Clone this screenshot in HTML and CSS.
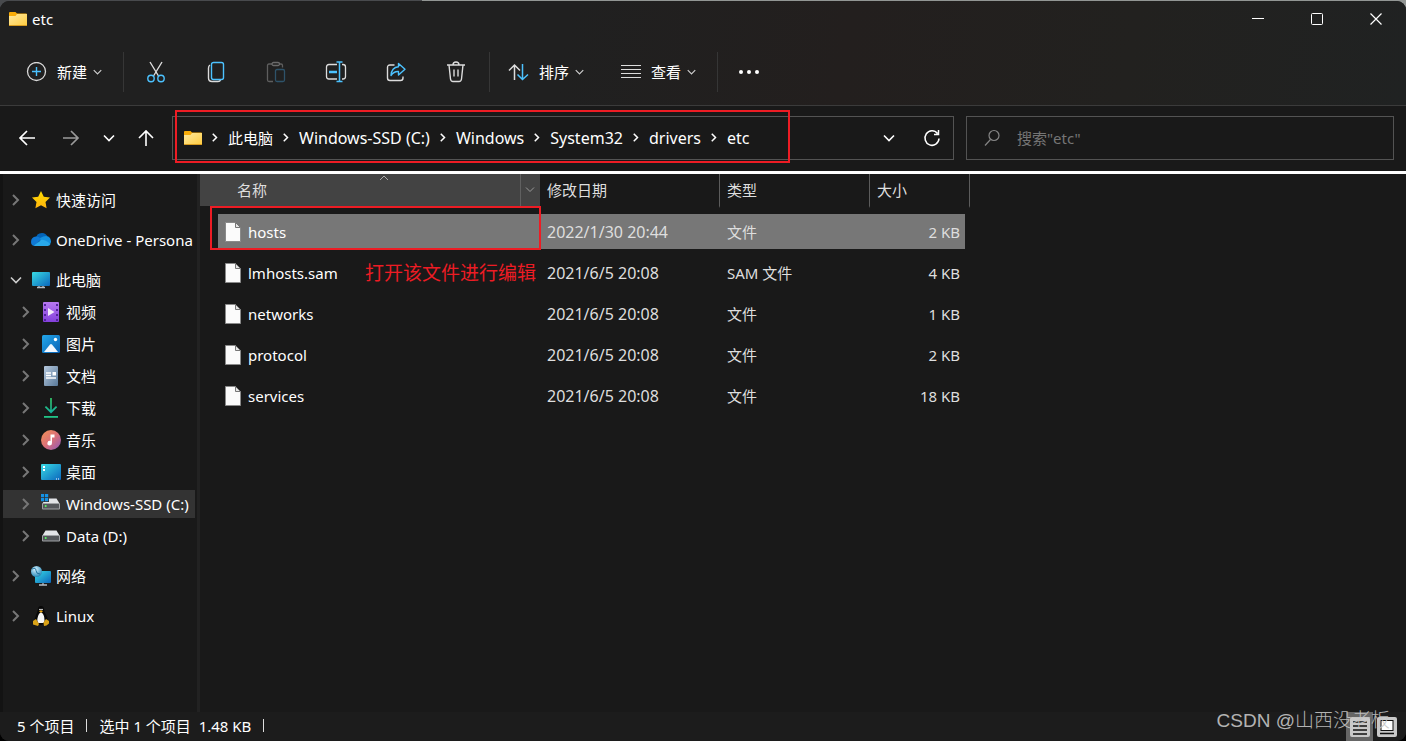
FILE: index.html
```html
<!DOCTYPE html>
<html lang="zh-CN">
<head>
<meta charset="utf-8">
<title>etc</title>
<link rel="stylesheet" href="styles.css">
</head>
<body>
<svg class="defs" aria-hidden="true">
  <defs>
    <linearGradient id="gFolder" x1="0" y1="0" x2="1" y2="1"><stop offset="0" stop-color="#ffe9a0"/><stop offset="1" stop-color="#ffcc3f"/></linearGradient>
    <linearGradient id="gScreen" x1="0" y1="0" x2="1" y2="1"><stop offset="0" stop-color="#38dbe4"/><stop offset="1" stop-color="#0b66bd"/></linearGradient>
    <linearGradient id="gVideo" x1="0" y1="0" x2="0" y2="1"><stop offset="0" stop-color="#b879f0"/><stop offset="1" stop-color="#8440dc"/></linearGradient>
    <linearGradient id="gPic" x1="0" y1="0" x2="1" y2="1"><stop offset="0" stop-color="#23a8ea"/><stop offset="1" stop-color="#0860b4"/></linearGradient>
    <linearGradient id="gDoc" x1="0" y1="0" x2="1" y2="1"><stop offset="0" stop-color="#b6c9de"/><stop offset="1" stop-color="#587898"/></linearGradient>
    <linearGradient id="gMusic" x1="0" y1="0" x2="1" y2="1"><stop offset="0" stop-color="#f59355"/><stop offset="0.5" stop-color="#dc7178"/><stop offset="1" stop-color="#8d58ba"/></linearGradient>
    <linearGradient id="gStar" x1="0" y1="0" x2="0" y2="1"><stop offset="0" stop-color="#ffdc00"/><stop offset="1" stop-color="#ffb40f"/></linearGradient>
    <linearGradient id="gDown" x1="0" y1="0" x2="0" y2="1"><stop offset="0" stop-color="#35d16d"/><stop offset="1" stop-color="#12ad9d"/></linearGradient>
    <radialGradient id="gGlobe" cx="0.4" cy="0.3" r="0.7"><stop offset="0" stop-color="#d9f3ff"/><stop offset="1" stop-color="#2689b9"/></radialGradient>
    <symbol id="folder" viewBox="0 0 18 14"><path d="M0 1q0-1 1-1h5.500l1.500 1.500h9q1 0 1 1V4H0z" fill="#f9ac08"/><path d="M0 4h6.500l1.500-2h10v10.500q0 1.500-1 1.500H1q-1 0-1-1z" fill="url(#gFolder)"/><path d="M0 13.500h18" stroke="#d89c20"/></symbol>
    <symbol id="right" viewBox="0 0 10 12"><path d="M2 1l5 5-5 5" fill="none" stroke="currentColor" stroke-width="2"/></symbol>
    <symbol id="down" viewBox="0 0 12 8"><path d="M1 1.500l5 5 5-5" fill="none" stroke="currentColor" stroke-width="1.600"/></symbol>
    <symbol id="file" viewBox="0 0 16 20"><path d="M.5.5h10l5 5v14H.5z" fill="#fbfbfb" stroke="#8a8a8a"/><path d="M10.500.5v5h5z" fill="#e5e5e5" stroke="#777"/></symbol>
    <symbol id="disk" viewBox="0 0 20 20"><path d="M4.500 4.500h11l3 5h-17z" fill="#e2e4e7"/><rect x="1" y="9" width="18" height="6.500" rx="1" fill="#a0a3a6"/><rect x="2" y="10" width="16" height="4.500" fill="#54575b"/><circle cx="4.700" cy="12" r="1" fill="#57ff62"/></symbol>
  </defs>
</svg>
<div class="window">
  <header class="chrome">
    <div class="titlebar">
      <svg class="folder"><use href="#folder"/></svg>
      <h1 class="title">etc</h1>
      <div class="controls">
        <button class="control" aria-label="最小化"><svg width="12" height="12"><path d="M0 5.500h12" stroke="#fff"/></svg></button>
        <button class="control" aria-label="最大化"><svg width="12" height="12"><rect x=".5" y=".5" width="11" height="11" rx="1" fill="none" stroke="#fff"/></svg></button>
        <button class="control" aria-label="关闭"><svg width="12" height="12"><path d="M.5.5l11 11M11.500.5l-11 11" stroke="#fff" stroke-width="1.200"/></svg></button>
      </div>
    </div>
    <div class="toolbar" role="toolbar">
      <button class="command command-new">
        <svg width="22" height="20" viewBox="0 0 22 20" fill="none"><circle cx="10.500" cy="9.500" r="9" stroke="#d9d9d9" stroke-width="1.300"/><path d="M6 9.500h9M10.500 5v9" stroke="#4cc2ff" stroke-width="1.400"/></svg>
        <span>新建</span><svg class="caret"><use href="#down"/></svg>
      </button>
      <span class="divider"></span>
      <div class="tools">
        <button class="tool" aria-label="剪切"><svg width="20" height="22" fill="none" stroke-width="1.400"><path d="M4 1l8.500 14M16 1L7.500 15" stroke="#dcdcdc"/><circle cx="5" cy="17.500" r="3.200" stroke="#4cc2ff"/><circle cx="15" cy="17.500" r="3.200" stroke="#4cc2ff"/></svg></button>
        <button class="tool" aria-label="复制"><svg width="20" height="22" fill="none" stroke-width="1.400"><path d="M4 4q-1.500 1-1.500 3v10q0 3.500 3.500 3.500h6q2 0 2.500-1.500" stroke="#dcdcdc"/><rect x="5.500" y="1.500" width="12" height="17" rx="2" stroke="#4cc2ff"/></svg></button>
        <button class="tool" aria-label="粘贴" disabled><svg width="20" height="22" fill="none" stroke-width="1.300"><path d="M6 3H3q-1.500 0-1.500 1.500v14.500q0 1.500 1.500 1.500h4M13 3h2q1.500 0 1.500 1.500v2" stroke="#5e5e5e"/><rect x="6" y="1.500" width="7.500" height="3" rx="1.500" stroke="#6a6a6a"/><rect x="9.500" y="8.500" width="9" height="12" rx="1.500" stroke="#2e536a"/></svg></button>
        <button class="tool" aria-label="重命名"><svg width="22" height="22" fill="none" stroke-width="1.300"><path d="M12 3.500H4q-2.500 0-2.500 2.500v9.500q0 2.500 2.500 2.500h8M17 3.500h1q2.500 0 2.500 2.500v9.500q0 2.500-2.500 2.500h-1" stroke="#dcdcdc"/><path d="M14.500 1.500v19M11.500 1h6M11.500 20.500h6" stroke="#4cc2ff" stroke-width="1.500"/><path d="M4 11h8" stroke="#4cc2ff" stroke-width="2.400"/></svg></button>
        <button class="tool" aria-label="共享"><svg width="20" height="22" fill="none" stroke-width="1.400"><path d="M8.500 4H4Q1.500 4 1.500 6.500V17Q1.500 19.500 4 19.500h10.500q2.500 0 2.500-2.500v-1.500" stroke="#dcdcdc"/><path d="M12.500 2.500l6.500 5.700-6.500 5.800v-3.500q-4.500-.4-7.500 4 .5-8 7.500-8.700z" stroke="#4cc2ff" stroke-linejoin="round"/></svg></button>
        <button class="tool" aria-label="删除"><svg width="20" height="22" fill="none" stroke="#dcdcdc" stroke-width="1.400"><path d="M1 4h18M7 4q0-3 3-3t3 3M3 4l1.500 14q.3 2.500 2.500 2.500h6q2.200 0 2.500-2.500L17 4M8 8.500v7M12 8.500v7"/></svg></button>
      </div>
      <span class="divider"></span>
      <button class="command command-sort">
        <svg width="22" height="20" fill="none" stroke-width="1.500"><path d="M6.500 18V3M1 8.500L6.500 3 12 8.500" stroke="#dcdcdc"/><path d="M14.500 2v15.500M9.500 12.500l5 5 5.500-5" stroke="#4cc2ff"/></svg>
        <span>排序</span><svg class="caret"><use href="#down"/></svg>
      </button>
      <button class="command command-view">
        <svg width="22" height="20"><path d="M1 3.500h20M1 7.500h20M1 11.500h20M1 15.500h20" stroke="#dcdcdc" stroke-width="1.200"/></svg>
        <span>查看</span><svg class="caret"><use href="#down"/></svg>
      </button>
      <span class="divider"></span>
      <button class="command command-more" aria-label="更多"><svg width="22" height="6" fill="#fff"><circle cx="3" cy="3" r="2"/><circle cx="11" cy="3" r="2"/><circle cx="19" cy="3" r="2"/></svg></button>
    </div>
  </header>

  <div class="navbar">
    <button class="nav-button" aria-label="后退"><svg width="18" height="18" fill="none" stroke="#fff" stroke-width="1.700"><path d="M17 9H2M9 2L2 9l7 7"/></svg></button>
    <button class="nav-button" aria-label="前进"><svg width="18" height="18" fill="none" stroke="#9a9a9a" stroke-width="1.700"><path d="M1 9h15M9 2l7 7-7 7"/></svg></button>
    <button class="nav-button nav-recent" aria-label="最近位置"><svg width="12" height="8"><use href="#down"/></svg></button>
    <button class="nav-button nav-up" aria-label="上移"><svg width="18" height="18" fill="none" stroke="#fff" stroke-width="1.600"><path d="M9 17V2M2 9l7-7 7 7"/></svg></button>
    <div class="address">
      <svg class="folder"><use href="#folder"/></svg>
      <ol class="crumbs">
        <li><svg class="sep"><use href="#right"/></svg><a href="#" class="cjk">此电脑</a></li>
        <li><svg class="sep"><use href="#right"/></svg><a href="#">Windows-SSD (C:)</a></li>
        <li><svg class="sep"><use href="#right"/></svg><a href="#">Windows</a></li>
        <li><svg class="sep"><use href="#right"/></svg><a href="#">System32</a></li>
        <li><svg class="sep"><use href="#right"/></svg><a href="#">drivers</a></li>
        <li><svg class="sep"><use href="#right"/></svg><a href="#">etc</a></li>
      </ol>
      <button class="address-button" aria-label="历史记录"><svg width="12" height="8"><use href="#down"/></svg></button>
      <button class="address-button" aria-label="刷新"><svg width="18" height="18" fill="none" stroke="#fff" stroke-width="1.500"><path d="M14.500 4.500A7 7.300 0 1 0 16 9.500M15.500 1v4.500H11"/></svg></button>
      <span class="mark mark-address"></span>
    </div>
    <label class="search">
      <svg width="16" height="18" fill="none" stroke="#858585" stroke-width="1.200"><circle cx="10" cy="6.500" r="5"/><path d="M6.500 10.500L1 16.500"/></svg>
      <input type="text" placeholder='搜索"etc"' aria-label="搜索">
    </label>
  </div>

  <div class="body">
    <nav class="sidebar">
      <a href="#" class="node"><svg class="twist"><use href="#right"/></svg>
        <svg class="icon"><path d="M10 1l2.800 5.700 6.200.9-4.500 4.400 1.100 6.200L10 15.300l-5.600 2.900 1.100-6.200L1 7.600l6.200-.9z" fill="url(#gStar)"/></svg><span>快速访问</span></a>
      <a href="#" class="node spaced"><svg class="twist"><use href="#right"/></svg>
        <svg class="icon"><path d="M5 9q0-6 6-6 4 0 5.500 4L10 12z" fill="#0364b8"/><path d="M0 12q0-5 5-5.500 3-.5 5 2.500l-6 7Q0 16 0 12z" fill="#0f78d4"/><path d="M9 8q7-4 10 0 2 4 0 6l-9-2z" fill="#1490df"/><path d="M3 15.500L10 10q3-1 9.500 4-.8 2-3 2H4z" fill="#28a8ea"/></svg><span>OneDrive - Persona</span></a>
      <a href="#" class="node open spaced"><svg class="twist"><use href="#down"/></svg>
        <svg class="icon"><rect x="1" y="2" width="18" height="14" rx="1" fill="url(#gScreen)"/><path d="M6 17.500h8M8 16v1.500h4V16" stroke="#b5bcc4" fill="none" stroke-width="1.300"/></svg><span>此电脑</span></a>
      <a href="#" class="node child"><svg class="twist"><use href="#right"/></svg>
        <svg class="icon"><rect x="2" y="0" width="16" height="20" rx="1" fill="url(#gVideo)"/><path d="M4 2v17M16 2v17" stroke="#51239a" stroke-width="2" stroke-dasharray="2 3"/><path d="M7 6l6.500 4L7 14z" fill="#f4eafb"/></svg><span>视频</span></a>
      <a href="#" class="node child"><svg class="twist"><use href="#right"/></svg>
        <svg class="icon"><rect x="1" y="1" width="18" height="18" rx="1.500" fill="url(#gPic)"/><path d="M3 18l6-7.500q1-1 2 0l6 7.500z" fill="#f2f8ff"/><circle cx="14.500" cy="5.500" r="1.700" fill="#fff"/></svg><span>图片</span></a>
      <a href="#" class="node child"><svg class="twist"><use href="#right"/></svg>
        <svg class="icon"><rect x="3" y="0" width="14" height="20" rx="1" fill="url(#gDoc)"/><path d="M5 7h5M5 9.500h5M5 12h10" stroke="#fff" stroke-width="1.300"/><rect x="11.500" y="6" width="3.500" height="3.500" fill="#fff"/></svg><span>文档</span></a>
      <a href="#" class="node child"><svg class="twist"><use href="#right"/></svg>
        <svg class="icon"><path d="M9.200 0h1.600v12l4.200-4 1.200 1.200L10 15.500 3.800 9.200 5 8l4.200 4z" fill="url(#gDown)"/><rect x="3" y="18" width="14" height="1.800" fill="#21c487"/></svg><span>下载</span></a>
      <a href="#" class="node child"><svg class="twist"><use href="#right"/></svg>
        <svg class="icon"><circle cx="10" cy="10" r="10" fill="url(#gMusic)"/><path d="M9.500 4.500h4v3h-2.500V13a2.300 2.300 0 1 1-1.500-2z" fill="#fff"/></svg><span>音乐</span></a>
      <a href="#" class="node child"><svg class="twist"><use href="#right"/></svg>
        <svg class="icon"><rect y="2" width="20" height="16" rx="1" fill="url(#gScreen)"/><path d="M2 4h2v2H2zM2 7h2v2H2zM15 16.500h1v1h-1zM17 16.500h1v1h-1z" fill="#fff"/></svg><span>桌面</span></a>
      <a href="#" class="node child current"><svg class="twist"><use href="#right"/></svg>
        <svg class="icon"><use href="#disk"/><rect width="8" height="8" fill="#303030"/><path d="M0 0h3.200v3.200H0zM4 0h3.200v3.200H4zM0 4h3.200v3.200H0zM4 4h3.200v3.200H4z" fill="#1492e6"/></svg><span>Windows-SSD (C:)</span></a>
      <a href="#" class="node child"><svg class="twist"><use href="#right"/></svg>
        <svg class="icon"><use href="#disk"/></svg><span>Data (D:)</span></a>
      <a href="#" class="node spaced"><svg class="twist"><use href="#right"/></svg>
        <svg class="icon"><rect x="4" y="5" width="16" height="12" rx="1" fill="url(#gScreen)"/><path d="M8 19h8M12 17v2" stroke="#b5bcc4" stroke-width="1.300"/><circle cx="5.500" cy="5.500" r="5.500" fill="url(#gGlobe)"/><path d="M1 3q4-2 4 1.500T9 8" fill="none" stroke="#1e719b"/></svg><span>网络</span></a>
      <a href="#" class="node spaced"><svg class="twist"><use href="#right"/></svg>
        <svg class="icon"><path d="M10 0q3.200 0 3.200 4 0 2 2 5t1.300 7L10 19l-6.500-3Q3.500 12 5 9t1.800-5Q6.800 0 10 0z" fill="#080808"/><path d="M10 6.500q2 0 3.200 4.500 1 4-.7 6H7.500q-2-2-.7-6Q8 6.500 10 6.500z" fill="#f7f7f7"/><circle cx="9" cy="3.500" r=".8" fill="#fff"/><circle cx="11" cy="3.500" r=".8" fill="#fff"/><path d="M8 5.200l2-1 2 1-2 1.500z" fill="#efab13"/><path d="M2 15l3-2 3 5-1 2-5-1.500zM18 15l-3-2-2.500 3.500.5 3.500 2.500-.5 2.500-2z" fill="#dba317"/></svg><span>Linux</span></a>
    </nav>

    <main class="files">
      <table class="list">
        <colgroup><col class="col-name"><col class="col-date"><col class="col-type"><col class="col-size"></colgroup>
        <thead>
          <tr>
            <th class="sorted">名称<svg class="sort-mark" width="10" height="6" fill="none" stroke="#aaa"><path d="M1 5l4-4 4 4"/></svg>
              <button class="filter" aria-label="筛选"><svg width="10" height="8" fill="none" stroke="#999"><path d="M1 1.500l4 4 4-4"/></svg></button></th>
            <th>修改日期</th><th>类型</th><th>大小</th>
          </tr>
        </thead>
        <tbody>
          <tr class="selected"><td><div class="name"><svg class="file"><use href="#file"/></svg>hosts</div><span class="mark mark-row"></span></td><td class="date">2022/1/30 20:44</td><td>文件</td><td>2 KB</td></tr>
          <tr><td><div class="name"><svg class="file"><use href="#file"/></svg>lmhosts.sam</div><span class="note">打开该文件进行编辑</span></td><td class="date">2021/6/5 20:08</td><td>SAM 文件</td><td>4 KB</td></tr>
          <tr><td><div class="name"><svg class="file"><use href="#file"/></svg>networks</div></td><td class="date">2021/6/5 20:08</td><td>文件</td><td>1 KB</td></tr>
          <tr><td><div class="name"><svg class="file"><use href="#file"/></svg>protocol</div></td><td class="date">2021/6/5 20:08</td><td>文件</td><td>2 KB</td></tr>
          <tr><td><div class="name"><svg class="file"><use href="#file"/></svg>services</div></td><td class="date">2021/6/5 20:08</td><td>文件</td><td>18 KB</td></tr>
        </tbody>
      </table>
    </main>
  </div>

  <footer class="status">
    <span class="status-item">5 个项目</span>
    <span class="status-item">选中 1 个项目&nbsp; 1.48 KB</span>
    <div class="views">
      <button class="view active" aria-label="详细信息"><svg width="20" height="20"><rect width="20" height="20" rx="2" fill="#c9c9c9"/><path d="M3 5h14M3 9h14M3 13h14M3 17h14" stroke="#111" stroke-width="1.500"/></svg></button>
      <button class="view" aria-label="大图标"><svg width="20" height="20"><rect width="20" height="20" rx="2" fill="#c9c9c9"/><rect x="4" y="3.500" width="12" height="10" fill="#fff" stroke="#111"/><path d="M3 16.500h14" stroke="#111" stroke-width="1.500"/></svg></button>
    </div>
    <span class="watermark">CSDN @山西没老板</span>
  </footer>
</div>
</body>
</html>
```
FILE: styles.css
```css
* { box-sizing: border-box; }

body {
  margin: 0;
  background: #000 linear-gradient(to right, #484a4d 30%, #929694 30%, #929694 100%) top / 100% 16px no-repeat;
  color: #fff;
  font: 15px/20px "Noto Sans", "Noto Sans CJK SC", sans-serif;
}

button {
  padding: 0;
  border: 0;
  background: none;
  color: inherit;
  font: inherit;
}

a { color: inherit; text-decoration: none; }
svg { display: block; flex: none; }
.defs { position: absolute; width: 0; height: 0; }

.window {
  display: flex;
  flex-direction: column;
  min-height: calc(100vh - 1px);
  margin-top: 1px;
  border-radius: 9px;
  background: #191919;
  overflow: hidden;
}

/* Title bar and command bar */
.chrome {
  border-bottom: 1px solid #3b3b3b;
  background: linear-gradient(100deg, #202020 40%, #231f1e 60%, #22211f 80%, #202222);
}

.titlebar {
  display: flex;
  align-items: center;
  height: 36px;
  padding: 0 1px 0 9px;
}

.folder { width: 18px; height: 14px; }
.title { margin: 0 0 0 5px; font-size: 15px; font-weight: 400; }
.controls { display: flex; margin-left: auto; }
.control { display: grid; place-items: center; width: 59px; height: 36px; }

.toolbar { display: flex; align-items: center; height: 68px; padding-top: 2px; }
.divider { width: 1px; height: 40px; background: #363636; }
.tools { display: flex; padding: 0 3px 0 2px; }
.tool { display: grid; place-items: center; width: 60px; height: 44px; }
.command { display: flex; align-items: center; gap: 9px; height: 44px; }
.command-new { width: 123px; padding-left: 26px; }
.command-sort { width: 112px; padding-left: 18px; }
.command-view { width: 115px; padding-left: 18px; }
.command-more { padding: 0 20px; }
.caret { width: 9px; height: 6px; margin-left: -3px; color: #ccc; }

/* Navigation */
.navbar {
  display: flex;
  align-items: center;
  height: 65px;
  padding: 0 12px 2px 5px;
}

.nav-button { display: grid; place-items: center; width: 44px; height: 44px; }
.nav-recent { width: 32px; }
.nav-up { width: 42px; }

.address {
  position: relative;
  display: flex;
  flex: 769 1 0;
  align-items: center;
  height: 44px;
  margin-left: 5px;
  padding-left: 11px;
  border: 1px solid #535353;
}

.crumbs {
  display: flex;
  margin: 0 auto 0 0;
  padding: 0;
  font-size: 16px;
  list-style: none;
}

.crumbs li { display: flex; align-items: center; }
.crumbs .cjk { font-size: 15px; }
.sep { width: 8px; height: 9px; margin: 0 9px; }
.address-button { display: grid; place-items: center; width: 43px; height: 42px; }

.search {
  display: flex;
  flex: 409 1 0;
  align-items: center;
  gap: 17px;
  height: 44px;
  margin-left: 12px;
  padding-left: 17px;
  border: 1px solid #535353;
}

.search input {
  flex: 1;
  min-width: 0;
  padding: 0;
  border: 0;
  outline: 0;
  background: none;
  color: #fff;
  font: inherit;
}

.search input::placeholder { color: #757575; }

/* Folder tree */
.body {
  display: flex;
  flex: 1;
  border-top: 3px solid #fff;
}

.sidebar {
  display: flex;
  flex: none;
  flex-direction: column;
  gap: 4px;
  width: 200px;
  padding: 12px 2px 12px 0;
  border-right: 3px solid #222;
  border-left: 3px solid #131313;
}

.node {
  display: flex;
  align-items: center;
  height: 28px;
  padding-left: 8px;
  overflow: hidden;
  white-space: nowrap;
}

.spaced { margin-top: 8px; }
.child { padding-left: 18px; }
.current { background: #333; }
.twist { width: 10px; height: 12px; margin-right: 10px; color: #777; }
.open .twist { width: 12px; height: 8px; margin: 0 9px 0 -1px; color: #ccc; }
.icon { width: 20px; height: 20px; margin-right: 5px; }

/* File list */
.files { flex: 1; min-width: 0; }
.list { width: 770px; border-spacing: 0; table-layout: fixed; }
.col-name { width: 340px; }
.col-date { width: 180px; }
.col-type { width: 150px; }
.col-size { width: 100px; }

.list th {
  position: relative;
  height: 34px;
  padding: 0 7px;
  border-right: 1px solid #5c5c5c;
  border-bottom: 2px solid #191919;
  color: #dedede;
  font-weight: 400;
  text-align: left;
}

.list .sorted { padding-left: 37px; border-right: 0; background: #434343; }
.sort-mark { position: absolute; top: 1px; left: 179px; }

.filter {
  position: absolute;
  top: 0;
  right: 0;
  display: grid;
  place-items: center;
  width: 20px;
  height: 32px;
  padding-right: 2px;
  border-left: 1px solid #606060;
}

.list td {
  position: relative;
  height: 41px;
  padding: 0 7px;
  border: 0 solid transparent;
  border-top-width: 6px;
  background-clip: padding-box;
  color: #dedede;
}

.list td:first-child { border-left-width: 18px; color: #fff; }
.list td:last-child { padding-right: 5px; border-right-width: 5px; text-align: right; }
.list .date { font-size: 16px; }
.selected td { background-color: #777; }
.name { display: flex; align-items: center; gap: 7px; }
.file { width: 16px; height: 20px; }

/* Annotations */
.mark { position: absolute; border: 2px solid #ed1c24; pointer-events: none; }
.mark-address { top: -7px; left: 2px; width: 615px; height: 53px; }
.mark-row { top: -8px; right: -1px; bottom: -1px; left: -8px; z-index: 1; }
.note {
  position: absolute;
  top: 8px;
  right: 4px;
  color: #ed1c24;
  font-size: 19px;
  white-space: nowrap;
}

/* Status bar */
.status {
  position: relative;
  display: flex;
  align-items: center;
  height: 29px;
  padding: 0 9px 0 17px;
  background: #1c1c1c;
}

.status-item { display: flex; align-items: center; margin-right: 12px; padding-bottom: 2px; }
.status-item::after { width: 1px; height: 13px; margin-left: 12px; background: #ddd; content: ""; }
.views { display: flex; gap: 4px; margin-left: auto; }
.view { display: grid; place-items: center; width: 20px; height: 29px; }
.view.active { width: 27px; background: #666; }

.watermark {
  position: absolute;
  right: 16px;
  bottom: 10px;
  color: #c4c4c4;
  font-family: "Liberation Sans", "Noto Sans CJK SC", sans-serif;
  font-size: 19px;
  font-weight: 300;
  opacity: 0.9;
}
```
